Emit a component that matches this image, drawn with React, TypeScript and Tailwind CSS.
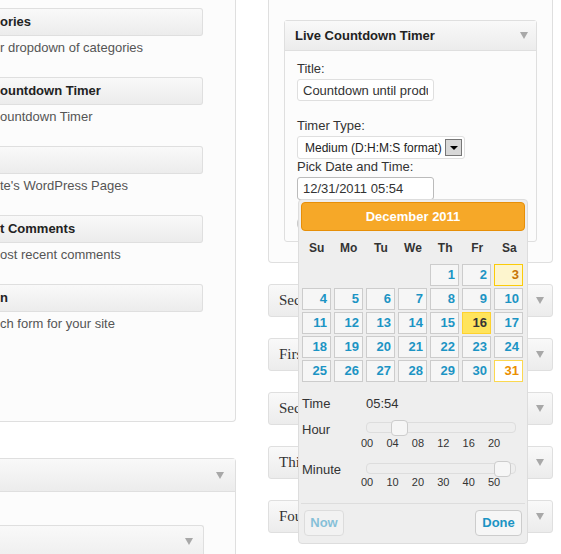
import React from "react";

const available = [
  { title: "ories", desc: "r dropdown of categories" },
  { title: "ountdown Timer", desc: "ountdown Timer" },
  { title: "", desc: "te's WordPress Pages" },
  { title: "t Comments", desc: "ost recent comments" },
  { title: "n", desc: "ch form for your site" },
];

const sidebars = [
  "Secondary Widget Area",
  "First Footer Widget Area",
  "Second Footer Widget Area",
  "Third Footer Widget Area",
  "Fourth Footer Widget Area",
];

const dayNames = ["Su", "Mo", "Tu", "We", "Th", "Fr", "Sa"];

function Arrow({ className = "" }: { className?: string }) {
  return (
    <span
      className={`block h-0 w-0 border-x-[4px] border-t-[7px] border-x-transparent border-t-[#a8a8a8] ${className}`}
    />
  );
}

function DayCell({ day }: { day: number | null }) {
  if (day === null) return <div />;
  let tone = "border-[#cccccc] bg-[#f6f6f6] text-[#1c94c4]";
  if (day === 3) tone = "border-[#fbcb09] bg-[#fdf5ce] text-[#c77405]";
  if (day === 16) tone = "border-[#fed22f] bg-[#ffe45c] text-[#363636]";
  if (day === 31) tone = "border-[#fbd850] bg-white text-[#eb8f00]";
  return (
    <div className={`h-[22px] border pr-[3px] text-right text-[13px] font-bold leading-[20px] ${tone}`}>
      {day}
    </div>
  );
}

function Slider({ handle }: { handle: number }) {
  return (
    <div className="relative h-[11px] w-[150px] rounded-[4px] border border-[#dddddd] bg-[#eeeeee]">
      <div
        className="absolute top-[-3px] h-[16px] w-[17px] rounded-[4px] border border-[#cccccc] bg-[#f6f6f6]"
        style={{ left: handle }}
      />
    </div>
  );
}

function Ticks({ labels }: { labels: string[] }) {
  return (
    <div className="ml-[60px] flex text-[11px] leading-[12px] text-[#333]">
      {labels.map((l) => (
        <span key={l} className="w-[25.4px]">
          {l}
        </span>
      ))}
    </div>
  );
}

function DatePicker() {
  const cells: (number | null)[] = [null, null, null, null];
  for (let d = 1; d <= 31; d++) cells.push(d);

  return (
    <div className="absolute left-[298px] top-[199px] h-[345px] w-[230px] rounded-[4px] border border-[#dddddd] bg-[#eeeeee] p-[2px] font-['Liberation_Sans',Arial,sans-serif] text-[#333]">
      <div className="flex h-[29px] items-center justify-center rounded-[4px] border border-[#e78f08] bg-[#f6a828] text-[13px] font-bold text-white">
        December 2011
      </div>
      <div className="grid h-[33px] grid-cols-7 items-center gap-x-[3px] px-[1px] text-center text-[12px] font-bold">
        {dayNames.map((d) => (
          <span key={d}>{d}</span>
        ))}
      </div>
      <div className="grid grid-cols-[repeat(7,29px)] gap-x-[3px] gap-y-[2px] px-[1px]">
        {cells.map((d, i) => (
          <DayCell key={i} day={d} />
        ))}
      </div>

      <div className="mt-[13px] flex h-[18px] items-center px-[1px] text-[13px]">
        <span className="w-[64px]">Time</span>
        <span>05:54</span>
      </div>
      <div className="mt-[9px] flex h-[16px] items-start px-[1px] text-[13px] leading-[16px]">
        <span className="w-[64px]">Hour</span>
        <Slider handle={24} />
      </div>
      <div className="mt-[-1px]">
        <Ticks labels={["00", "04", "08", "12", "16", "20"]} />
      </div>
      <div className="mt-[13px] flex h-[16px] items-start px-[1px] text-[13px] leading-[16px]">
        <span className="w-[64px]">Minute</span>
        <div className="mt-[1px]">
          <Slider handle={127} />
        </div>
      </div>
      <div className="mt-[-2px]">
        <Ticks labels={["00", "10", "20", "30", "40", "50"]} />
      </div>

      <div className="mt-[15px] flex justify-between border-t border-[#dddddd] px-[3px] pt-[6px]">
        <button className="h-[26px] w-[40px] rounded-[4px] border border-[#cccccc] bg-[#f6f6f6] text-[13px] font-bold text-[#1c94c4] opacity-50">
          Now
        </button>
        <button className="h-[26px] w-[47px] rounded-[4px] border border-[#cccccc] bg-[#f6f6f6] text-[13px] font-bold text-[#1c94c4]">
          Done
        </button>
      </div>
    </div>
  );
}

export default function App() {
  return (
    <div className="relative h-[554px] w-[561px] overflow-hidden bg-white font-['Liberation_Sans',Arial,sans-serif] text-[13px] text-[#333]">
      <div className="flex items-start">
        {/* available widgets column */}
        <div className="flex w-[236px] flex-col">
          <div className="mt-[-10px] h-[432px] rounded-br-[4px] border-b border-r border-[#dfdfdf] bg-[#fcfcfc] pt-[18px]">
            {available.map((w, i) => (
              <div key={i} className="h-[69px]">
                <div className="h-[28px] w-[203px] rounded-r-[3px] border border-l-0 border-[#dfdfdf] bg-linear-to-b from-[#f9f9f9] to-[#ececec] text-[13px] font-bold leading-[26px] text-[#222]">
                  {w.title}
                </div>
                <div className="mt-[4px] leading-[16px] text-[#555]">{w.desc}</div>
              </div>
            ))}
          </div>

          <div className="mt-[36px] h-[120px] rounded-tr-[4px] border-r border-t border-[#dfdfdf] bg-[#fcfcfc]">
            <div className="flex h-[33px] items-center justify-end border-b border-[#dfdfdf] bg-linear-to-b from-[#f9f9f9] to-[#ececec] pr-[11px]">
              <Arrow />
            </div>
            <div className="mt-[33px] flex h-[40px] w-[204px] items-start justify-end rounded-tr-[3px] border-r border-t border-[#dfdfdf] bg-linear-to-b from-[#f9f9f9] to-[#ececec] pr-[10px] pt-[12px]">
              <Arrow />
            </div>
          </div>
        </div>

        {/* sidebars column */}
        <div className="ml-[32px] flex w-[285px] flex-col">
          <div className="mt-[-20px] h-[283px] rounded-b-[4px] border-x border-b border-[#dfdfdf] bg-[#fcfcfc] px-[15px]">
            <div className="pl-[3px] text-[12px] leading-[16px] text-[#777]">The primary widget area</div>
            <div className="mt-[24px] h-[222px] rounded-[3px] border border-[#dfdfdf] bg-[#fcfcfc]">
              <div className="flex h-[30px] items-center justify-between border-b border-[#dfdfdf] bg-linear-to-b from-[#f9f9f9] to-[#ececec] pl-[10px] pr-[8px] font-bold text-[#222]">
                <span>Live Countdown Timer</span>
                <Arrow />
              </div>
              <div className="px-[12px] pt-[10px]">
                <div className="leading-[16px]">Title:</div>
                <input
                  readOnly
                  value="Countdown until product launch"
                  className="mt-[2px] h-[22px] w-[137px] rounded-[3px] border border-[#dfdfdf] bg-white px-[5px] text-[13px] text-[#333] outline-none"
                />
                <div className="mt-[17px] leading-[16px]">Timer Type:</div>
                <div className="mt-[2px] flex h-[23px] w-[168px] items-center justify-between overflow-hidden rounded-[3px] border border-[#dfdfdf] bg-white pl-[7px] pr-[2px]">
                  <span className="whitespace-nowrap text-[12px] text-[#222]">Medium (D:H:M:S format)</span>
                  <span className="ml-[3px] flex h-[17px] w-[17px] shrink-0 items-center justify-center border border-[#777] bg-[#d8d8d8]">
                    <span className="block h-0 w-0 border-x-[4px] border-t-[4px] border-x-transparent border-t-black" />
                  </span>
                </div>
                <div className="leading-[16px]">Pick Date and Time:</div>
                <input
                  readOnly
                  value="12/31/2011 05:54"
                  className="mt-[2px] h-[23px] w-[137px] rounded-[3px] border border-[#bbb] bg-white px-[5px] text-[13px] text-[#333] outline-none"
                />
                <div className="mt-[18px] h-[11px] w-[40px] rounded-[4px] border border-[#ccc] bg-[#eee]" />
              </div>
            </div>
          </div>

          <div className="mt-[21px] flex flex-col gap-[21px]">
            {sidebars.map((s) => (
              <div
                key={s}
                className="flex h-[33px] items-center justify-between rounded-[3px] border border-[#dfdfdf] bg-linear-to-b from-[#f9f9f9] to-[#ececec] pl-[10px] pr-[8px] font-['Liberation_Serif',serif] text-[15px] text-[#333]"
              >
                <span>{s}</span>
                <Arrow />
              </div>
            ))}
          </div>
        </div>
      </div>

      <DatePicker />
    </div>
  );
}
